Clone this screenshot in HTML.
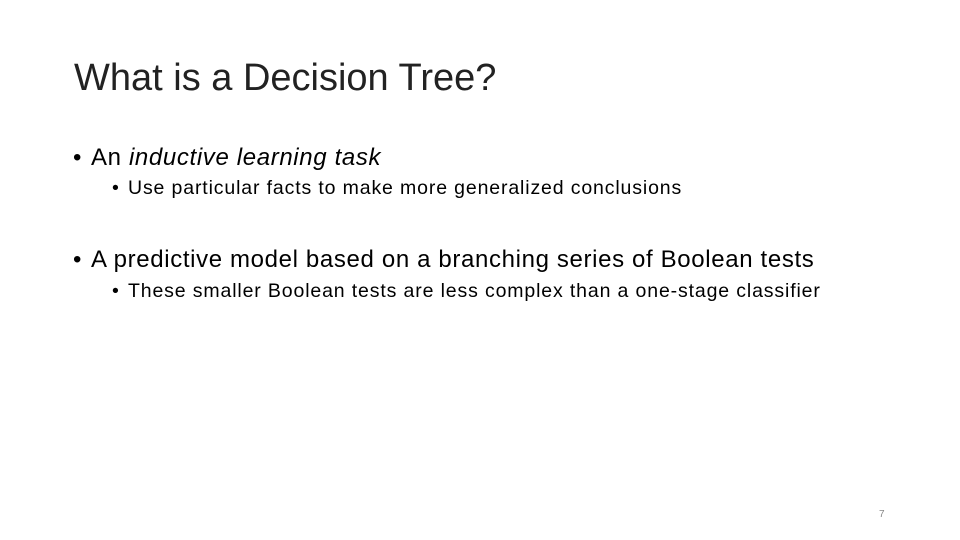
<!DOCTYPE html>
<html><head><style>
body{margin:0;width:960px;height:540px;background:#fff;font-family:"Liberation Sans",sans-serif;color:#000;position:relative;overflow:hidden}
div{position:absolute;white-space:nowrap}
.t{left:74px;top:57px;font-size:38px;color:#222;letter-spacing:0px}
.b1{left:91px;font-size:24px;letter-spacing:0.64px}
.b2{left:128px;font-size:19.5px;letter-spacing:0.86px}
.d1{left:73px;font-size:24px}
.d2{left:112px;font-size:19.5px}
</style></head><body>
<div class="t">What is a Decision Tree?</div>
<div class="d1" style="top:144px">•</div>
<div class="b1" style="top:144px">An <i>inductive learning task</i></div>
<div class="d2" style="top:177px">•</div>
<div class="b2" style="top:177px">Use particular facts to make more generalized conclusions</div>
<div class="d1" style="top:246px">•</div>
<div class="b1" style="top:246px">A predictive model based on a branching series of Boolean tests</div>
<div class="d2" style="top:280px">•</div>
<div class="b2" style="top:280px">These smaller Boolean tests are less complex than a one-stage classifier</div>
<div style="left:879px;top:509px;font-size:10px;color:#888">7</div>
</body></html>
